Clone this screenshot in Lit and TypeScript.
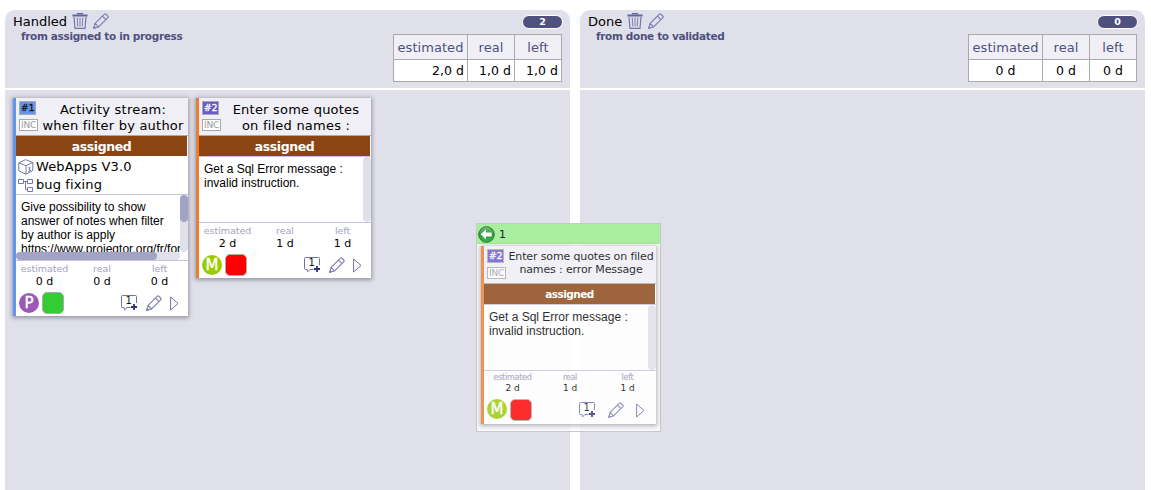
import { LitElement, html, css, nothing } from "lit";
import { customElement, property } from "lit/decorators.js";

const pencil = html`<svg width="16" height="16" viewBox="0 0 16 16" fill="none" stroke="#7b7bb2" stroke-width="1.1" stroke-linejoin="round">
  <path d="M.7 15.3 2.1 10.4 11.2 1.3q.9-.9 1.8 0l1.7 1.7q.9.9 0 1.8L5.6 13.9Z M2.1 10.4 5.6 13.9 M9.4 3.1l3.5 3.5"/><path d="M.7 15.3 1.2 13.7l1.1 1.1Z" fill="#7b7bb2"/></svg>`;
const trash = html`<svg width="16" height="16" viewBox="0 0 16 16" fill="none" stroke="#6363a0">
  <path d="M.5 2.5h15" stroke-width="2"/><path d="M5.5 1.5V.6h5v.9" stroke-width="1.2"/>
  <path d="M2 4l1 11.3h10L14 4" stroke-width="1.2" stroke="#7575ad"/><path d="M5.3 4.5l.4 9M8 4.5v9M10.7 4.5l-.4 9" stroke-width="1.2" stroke="#8a8abb"/></svg>`;
const comment = html`<svg width="17" height="16" viewBox="0 0 17 16" fill="none">
  <path d="M9.5 12.5H6l-2.4 2.3-.6-2.3H1.5q-1 0-1-1V1.5q0-1 1-1h13q1 0 1 1V8" stroke="#7171ab"/>
  <path d="M13 9v6M10 12h6" stroke="#303080" stroke-width="1.8"/>
  <text x="7.8" y="9.3" text-anchor="middle" font-family="DejaVu Sans" font-size="10" fill="#111">1</text></svg>`;
const play = html`<svg width="9" height="15" viewBox="0 0 9 15" fill="none" stroke="#7171ab"><path d="M.6 1v13L8 7.5Z"/></svg>`;
const cube = html`<svg width="16" height="16" viewBox="0 0 16 16" fill="none" stroke="#7777b0">
  <path d="M7.5.7 14.8 3.3v8.2L8 15.2 .8 11.8V3.8Z M.8 3.8 8 6.8l6.8-3.5M8 6.8v8.4M10.3 9l1.4-.8v3.8M10.4 12.6l2.6-1.3"/></svg>`;
const tree = html`<svg width="16" height="15" viewBox="0 0 16 15" fill="none" stroke="#7777b0">
  <path d="M.5 1.5h5v4h-5zM9.5 1.5h5v4h-5zM9.5 9.5h5v4h-5zM5.5 3.5h4M7.5 3.5v8h2"/></svg>`;
const back = html`<svg width="17" height="17" viewBox="0 0 17 17">
  <defs><linearGradient id="g" x2="0" y2="1"><stop offset="0" stop-color="#78b87c"/><stop offset=".5" stop-color="#249030"/><stop offset="1" stop-color="#2cb23c"/></linearGradient></defs>
  <circle cx="8.5" cy="8.5" r="7.8" fill="url(#g)" stroke="#1c7025"/>
  <path d="M2.5 8.3 8 3.4v3h5.7v4H8v3Z" fill="#fff"/></svg>`;

interface Card {
  id: number; idBg: string; idColor: string; edge: string; lines: string[];
  links?: boolean; body: string[]; est: string; real: string; left: string;
  who: string; whoBg: string; prio: string;
}

const first: Card = {
  id: 1, idBg: "#6495ed", idColor: "#111", edge: "#6495ed", lines: ["Activity stream:", "when filter by author"],
  links: true, body: ["Give possibility to show", "answer of notes when filter", "by author is apply", "https://www.projeqtor.org/fr/for"],
  est: "0 d", real: "0 d", left: "0 d", who: "P", whoBg: "#9b59b6", prio: "#32cd32",
};
const second: Card = {
  id: 2, idBg: "#6a5acd", idColor: "#fff", edge: "#ed7d31", lines: ["Enter some quotes", "on filed names :"],
  body: ["Get a Sql Error message :", "invalid instruction."],
  est: "2 d", real: "1 d", left: "1 d", who: "M", whoBg: "#99cc00", prio: "#ff0000",
};
const dragged: Card = { ...second, lines: ["Enter some quotes on filed", "names : error Message"] };

@customElement("ticket-card")
class TicketCard extends LitElement {
  @property({ attribute: false }) card!: Card;
  @property({ type: Boolean, reflect: true }) small = false;
  static styles = css`
    :host { display: block; width: 175px; box-sizing: border-box; font-family: "DejaVu Sans", sans-serif; color: #000; }
    .card { display: flex; flex-direction: column; background: #fff; border-left: 3px solid; box-shadow: 0 1px 4px 1px rgba(60,60,80,.45); }
    .top { display: flex; height: 37px; background: #efeff5; border-bottom: 1px solid #aaa; }
    .tags { width: 22px; padding: 3px 0 0 3px; box-sizing: border-box; }
    .id { width: 17px; height: 14px; box-sizing: border-box; border: 1px solid #aaa; font: 9.5px/12px "DejaVu Sans", sans-serif; -webkit-text-stroke: .3px; text-align: center; letter-spacing: -.2px; }
    .inc { width: 19px; height: 12px; box-sizing: border-box; border: 1px solid #aaa; margin-top: 4px; font-size: 9px; line-height: 11px; color: #999; background: #fff; text-align: center; letter-spacing: -.3px; }
    .title { flex: 1; text-align: center; font-size: 13px; line-height: 16px; padding-top: 4px; white-space: nowrap; letter-spacing: .22px; }
    :host([small]) .title { font-size: 11px; line-height: 13px; padding-top: 4px; letter-spacing: -.13px; }
    .status { height: 20px; background: #8b4513; color: #fff; font: bold 12.5px/21px "DejaVu Sans", sans-serif; letter-spacing: -.4px; text-align: center; margin-right: 1px; }
    :host([small]) .status { font-size: 10.5px; letter-spacing: -.55px; }
    .links { height: 38px; font-size: 13px; letter-spacing: .12px; line-height: 18px; padding: 2px 0 0 2px; box-sizing: border-box; }
    .link { display: flex; align-items: center; gap: 2px; height: 18px; }
    .desc { display: flex; height: 66px; box-sizing: content-box; border-top: 1px solid #c5c4dc; border-bottom: 1px solid #c5c4dc; position: relative; margin-bottom: -1px; }
    .desc { height: 65px; margin-bottom: 0; }
    .text { flex: 1; min-width: 0; overflow: hidden; padding: 5px 0 0 5px; font: 12px/14px "Liberation Sans", sans-serif; white-space: nowrap; box-sizing: border-box; }
    .bar { width: 8px; background: #e0e0ea; border-radius: 5px; }
    .thumb { height: 27px; background: #a3a3c6; border-radius: 5px; }
    .wide .text { height: 57px; }
    .wide .bar { height: 57px; }
    .hbar { position: absolute; left: 0; bottom: 0; width: 164px; height: 8px; background: #e0e0ea; border-radius: 5px; }
    .hthumb { width: 141px; height: 8px; background: #a3a3c6; border-radius: 5px; }
    .nums { display: flex; height: 29px; padding-top: 2px; box-sizing: border-box; text-align: center; }
    .num { width: 57px; font-size: 11px; line-height: 13px; letter-spacing: -.05px; }
    .num + .num { padding-left: .5px; }
    .label { font-size: 9.5px; line-height: 12px; color: #a3a3c3; letter-spacing: -.05px; }
    :host([small]) .nums { height: 27px; padding-top: 1px; }
    :host([small]) .label { font-size: 8px; letter-spacing: -.25px; line-height: 11px; -webkit-text-stroke: .2px; }
    :host([small]) .num { font-size: 9px; line-height: 11px; }
    .foot { display: flex; height: 26px; padding: 0 9px 0 3px; align-items: center; box-sizing: border-box; }
    .who { width: 20px; height: 20px; border-radius: 50%; color: #fff; font-size: 15px; line-height: 20px; text-align: center; -webkit-text-stroke: .4px; }
    :host([small]) .foot { height: 26px; align-items: flex-start; padding-top: 1px; }
    :host([small]) .tools { margin-top: 3px; }
    .prio { width: 22px; height: 22px; box-sizing: border-box; border: 1px solid #aaa; border-radius: 5px; margin-left: 3px; }
    .tools { margin-left: auto; display: flex; gap: 8px; align-items: center; }
    :host([small]) .tools { gap: 12px; margin-right: 2px; }
    svg { display: block; }
  `;
  render() {
    const c = this.card;
    return html`<div class="card" style="border-color:${c.edge}">
      <div class="top">
        <div class="tags"><div class="id" style="background:${c.idBg};color:${c.idColor}">#${c.id}</div><div class="inc">INC</div></div>
        <div class="title">${c.lines.map((l) => html`<div>${l}</div>`)}</div>
      </div>
      <div class="status">assigned</div>
      ${c.links ? html`<div class="links"><div class="link">${cube}WebApps V3.0</div><div class="link">${tree}bug fixing</div></div>` : nothing}
      <div class="desc ${c.links ? "wide" : ""}">
        <div class="text">${c.body.map((l) => html`<div>${l}</div>`)}</div>
        <div class="bar">${c.links ? html`<div class="thumb"></div>` : nothing}</div>
        ${c.links ? html`<div class="hbar"><div class="hthumb"></div></div>` : nothing}
      </div>
      <div class="nums">${[["estimated", c.est], ["real", c.real], ["left", c.left]].map(([k, v]) => html`<div class="num"><div class="label">${k}</div>${v}</div>`)}</div>
      <div class="foot"><div class="who" style="background:${c.whoBg}">${c.who}</div><div class="prio" style="background:${c.prio}"></div>
        <div class="tools">${comment}${pencil}${play}</div></div>
    </div>`;
  }
}

@customElement("app-root")
class AppRoot extends LitElement {
  static styles = css`
    :host { display: block; position: relative; width: 1151px; height: 490px; overflow: hidden; background: #fff; font-family: "DejaVu Sans", sans-serif; color: #000; }
    .board { display: flex; gap: 10px; padding: 10px 0 0 5px; }
    .col { width: 565px; height: 480px; display: flex; flex-direction: column; gap: 2px; }
    .head { display: flex; justify-content: space-between; height: 78px; background: #e0e0ea; border-radius: 10px 10px 0 0; padding: 0 8px; box-sizing: border-box; }
    .name { display: flex; gap: 5px; font-size: 13px; line-height: 22px; height: 19px; padding-top: 1px; }
    .name svg { margin-top: 2px; }
    .sub { margin-left: 8px; font: bold 10.5px/13px "DejaVu Sans", sans-serif; letter-spacing: -.34px; color: #50507f; }
    .side { display: flex; flex-direction: column; align-items: flex-end; }
    .count { width: 39px; height: 12px; margin: 5px -1px 0 0; border: 1px solid #fff; border-radius: 8px; background: #50507f; color: #fff; font: bold 9.5px/12px "DejaVu Sans", sans-serif; text-align: center; }
    table { border-collapse: collapse; margin-top: 5px; font-size: 13px; letter-spacing: .05px; }
    td { border: 1px solid #aaa; background: #fff; height: 22px; padding: 0 3px; text-align: center; box-sizing: border-box; font-size: 12.5px; }
    th { border: 1px solid #aaa; background: #efeff5; color: #50507f; font-weight: normal; height: 25px; padding: 0; box-sizing: border-box; }
    .a { width: 74px; } .b { width: 47px; }
    .r td { text-align: right; }
    .body { flex: 1; display: flex; align-items: flex-start; gap: 8px; background: #e0e0ea; padding: 8px; }
    .ghost { position: absolute; left: 476px; top: 223px; width: 185px; height: 209px; box-sizing: border-box; border: 1px solid #c8c8cc; background: rgba(255,255,255,.8); }
    .bar { display: flex; align-items: center; gap: 4px; height: 20px; background: rgba(152,235,140,.82); font-size: 11px; padding-left: 1px; color: #222; }
    .bar svg { opacity: .9; }
    .ghost ticket-card { margin: 2px 0 0 4px; opacity: .82; }
    svg { display: block; }
  `;
  column(name: string, sub: string, n: number, vals: string[], cards: Card[]) {
    return html`<div class="col">
      <div class="head">
        <div><div class="name"><span>${name}</span>${trash}${pencil}</div><div class="sub">${sub}</div></div>
        <div class="side"><div class="count">${n}</div>
          <table><tr><th class="a">estimated</th><th class="b">real</th><th class="b">left</th></tr>
            <tr class="${n ? "r" : ""}">${vals.map((v) => html`<td>${v}</td>`)}</tr></table></div>
      </div>
      <div class="body">${cards.map((c) => html`<ticket-card .card=${c}></ticket-card>`)}</div>
    </div>`;
  }
  render() {
    return html`<div class="board">
        ${this.column("Handled", "from assigned to in progress", 2, ["2,0 d", "1,0 d", "1,0 d"], [first, second])}
        ${this.column("Done", "from done to validated", 0, ["0 d", "0 d", "0 d"], [])}
      </div>
      <div class="ghost"><div class="bar">${back}<span>1</span></div><ticket-card small .card=${dragged}></ticket-card></div>`;
  }
}
